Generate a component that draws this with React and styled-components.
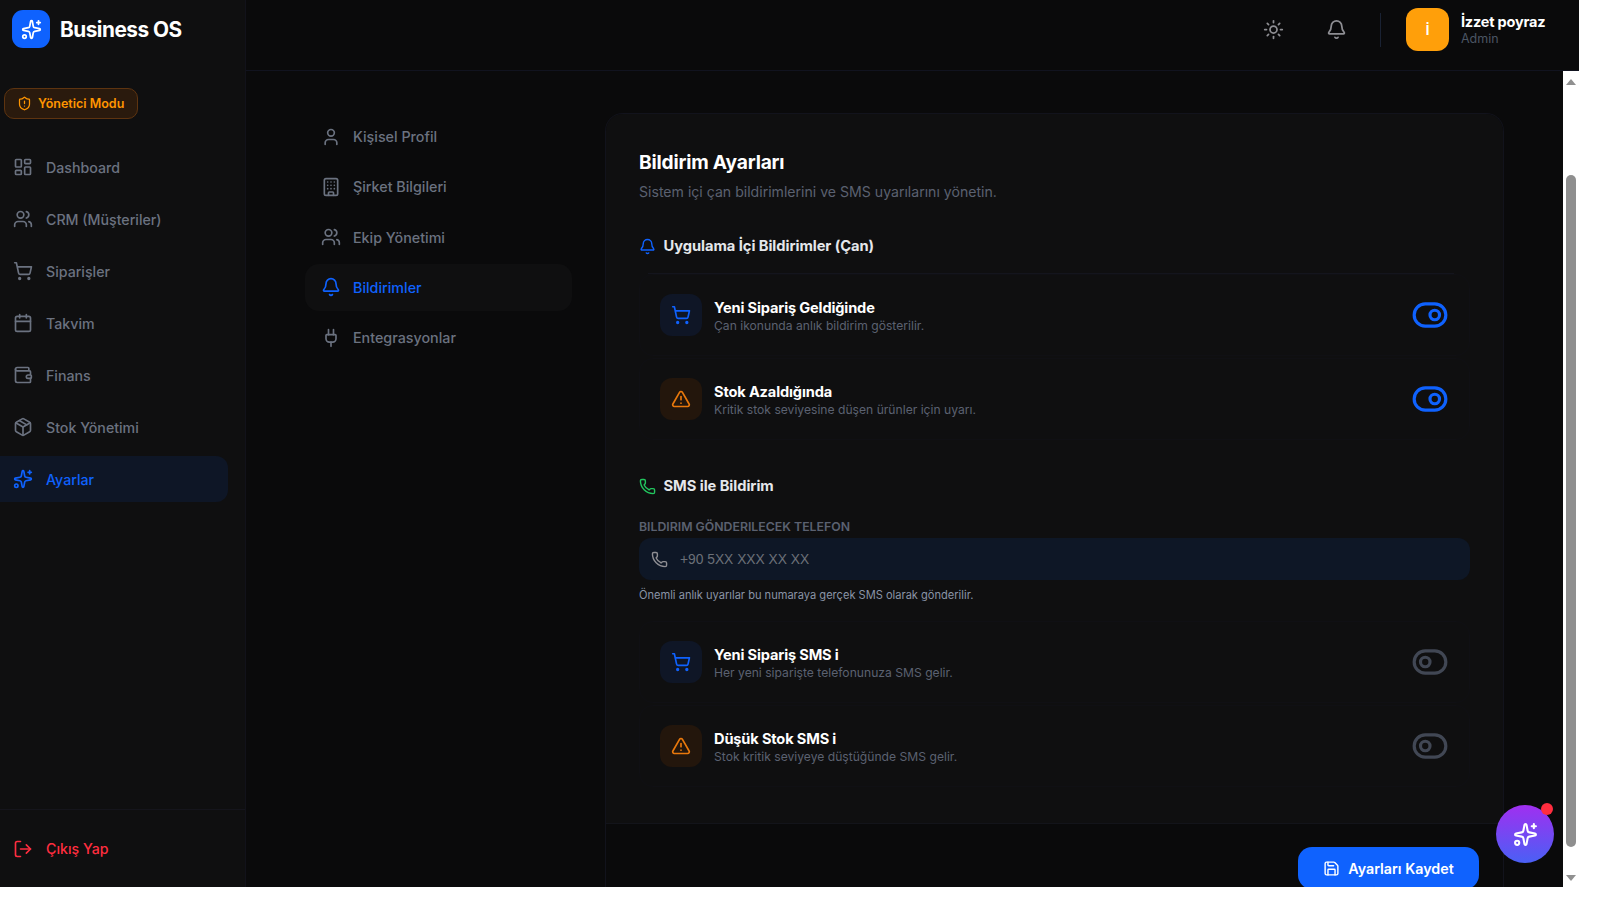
import React from 'react';
import styled, { createGlobalStyle } from 'styled-components';
import {
  Sparkles, ShieldAlert, LayoutDashboard, Users, ShoppingCart, Calendar, Wallet, Package,
  LogOut, Sun, Bell, User, Building, Plug, TriangleAlert, Phone, Save, ToggleRight, ToggleLeft,
} from 'lucide-react';

const Global = createGlobalStyle`
  html, body { margin: 0; padding: 0; background: #fff; overflow: hidden; }
  * { box-sizing: border-box; }
  body { font-family: Inter, "Liberation Sans", sans-serif; }
`;

const Shell = styled.div`
  position: relative; display: flex; width: 1579px; height: 887px; overflow: hidden; background: #0a0a0b;
`;
const Sidebar = styled.aside`
  width: 246px; flex: none; display: flex; flex-direction: column;
  background: #0f0f10; border-right: 1px solid #12121a;
`;
const Brand = styled.div`
  height: 88px; flex: none; display: flex; align-items: flex-start; gap: 10px; padding: 10px 0 0 12px;
`;
const LogoBox = styled.div`
  width: 38px; height: 38px; border-radius: 11px; background: #0f62fe; color: #fff;
  display: flex; align-items: center; justify-content: center;
`;
const BrandName = styled.div`
  font-size: 20.8px; font-weight: 700; color: #fff; letter-spacing: -0.5px; line-height: 39px;
`;
const AdminBadge = styled.div`
  margin-left: 4px; width: 134px; height: 31px; display: flex; align-items: center; gap: 6px; padding-left: 12px;
  border-radius: 10px; background: #2a1a0d; border: 1px solid #5e3410; color: #ff9500;
  font-size: 12.5px; font-weight: 600;
`;
const SideNav = styled.nav`
  margin-top: 25px; display: flex; flex-direction: column; gap: 6px;
`;
const SideItem = styled.div`
  width: 228px; height: 46px; display: flex; align-items: center; gap: 13px; padding-left: 13px;
  border-radius: 0 12px 12px 0;
  font-size: 14.2px; font-weight: 500;
  color: ${p => (p.$active ? '#0f62fe' : '#6b7280')};
  background: ${p => (p.$active ? '#0e1626' : 'transparent')};
`;
const SideFooter = styled.div`
  margin-top: auto; height: 78px; border-top: 1px solid #15151c; display: flex; align-items: center; gap: 13px;
  padding: 0 0 0 13px; color: #ff2d3f; font-size: 14.2px; font-weight: 500;
`;
const Column = styled.div`
  flex: 1; min-width: 0; display: flex; flex-direction: column;
`;
const Header = styled.header`
  height: 71px; flex: none; display: flex; align-items: center; justify-content: flex-end;
  background: #0a0a0b; border-bottom: 1px solid #11131f; padding: 0 33px 11px 0;
`;
const HeaderIcon = styled.div`
  color: #8e8e93; display: flex; margin-right: ${p => p.$mr}px;
`;
const Divider = styled.div`
  width: 1px; height: 34px; background: #1a2233; margin-right: 25px;
`;
const Avatar = styled.div`
  width: 43px; height: 43px; border-radius: 12px; background: #ff9f0a; color: #fff;
  display: flex; align-items: center; justify-content: center; font-size: 13px; font-weight: 700; margin-right: 12px;
`;
const UserBlock = styled.div`
  display: flex; flex-direction: column; width: 85px;
`;
const UserName = styled.div`
  font-size: 14.5px; font-weight: 700; color: #fff; line-height: 18px; white-space: nowrap; letter-spacing: -0.2px;
`;
const UserRole = styled.div`
  font-size: 12.5px; color: #4b5563; line-height: 15px;
`;
const Body = styled.div`
  flex: 1; min-height: 0; display: flex;
`;
const Main = styled.main`
  flex: 1; min-width: 0; overflow: hidden; display: flex; align-items: flex-start; gap: 33px; padding: 42px 0 0 59px;
`;
const SettingsNav = styled.nav`
  width: 267px; flex: none; display: flex; flex-direction: column; gap: 3.3px;
`;
const SettingsItem = styled.div`
  height: 47px; display: flex; align-items: center; gap: 12px; padding-left: 16px; border-radius: 14px;
  font-size: 14.3px; font-weight: 500;
  color: ${p => (p.$active ? '#0f62fe' : '#6b7280')};
  background: ${p => (p.$active ? '#0f0f10' : 'transparent')};
`;
const Card = styled.section`
  width: 899px; flex: none; border-radius: 18px 18px 0 0; min-height: 780px;
  border: 1px solid #12131c; border-bottom: none; overflow: hidden;
`;
const CardBody = styled.div`
  height: 710px; padding: 34px 33px 0 33px; background: #0f0f10; border-bottom: 1px solid #13141a;
`;
const Title = styled.h2`
  margin: 0; font-size: 19.2px; font-weight: 700; color: #fff; line-height: 28px; letter-spacing: -0.2px;
`;
const Subtitle = styled.p`
  margin: 4px 0 0; font-size: 14.1px; color: #5b6170; line-height: 24px;
`;
const SectionHead = styled.div`
  display: flex; align-items: center; gap: 7.5px; height: 26px; color: #e5e7eb; font-size: 14.7px; font-weight: 700;
  letter-spacing: -0.05px;
  margin-top: ${p => p.$mt}px;
`;
const SectionRule = styled.div`
  height: 1px; margin: 14px 16px 0 9px; background: #14151d;
`;
const RowList = styled.div`
  margin-top: ${p => p.$mt}px; display: flex; flex-direction: column; gap: 2px;
`;
const Row = styled.div`
  height: 82px; display: flex; align-items: center; padding: 0 20px 0 20px;
  border: 1px solid #101014; border-radius: 14px;
`;
const IconBox = styled.div`
  width: 42px; height: 42px; flex: none; border-radius: 12px; display: flex; align-items: center; justify-content: center;
  background: ${p => (p.$tone === 'blue' ? '#0f1626' : '#23160c')};
  color: ${p => (p.$tone === 'blue' ? '#0f62fe' : '#e8780c')};
`;
const RowText = styled.div`
  margin-left: 12px; padding-top: 4px; flex: 1; min-width: 0;
`;
const RowTitle = styled.div`
  font-size: 14.6px; font-weight: 700; color: #fff; line-height: 18px; letter-spacing: -0.15px;
`;
const RowDesc = styled.div`
  font-size: 12.13px; color: #5b6170; line-height: 18px;
`;
const ToggleWrap = styled.div`
  display: flex; color: ${p => (p.$on ? '#0f62fe' : '#414754')};
`;
const FieldLabel = styled.div`
  margin-top: 20px; font-size: 12.3px; font-weight: 600; color: #5b6170; line-height: 16px;
`;
const Field = styled.div`
  margin-top: 3px; height: 42px; display: flex; align-items: center; gap: 12px; padding-left: 12px;
  background: #0e1726; border-radius: 12px; color: #8e8e93;
`;
const FieldText = styled.span`
  font-family: "Liberation Sans", Arial, sans-serif; font-size: 13.8px; color: #6b7078;
`;
const Hint = styled.div`
  margin-top: 7px; font-size: 11.08px; color: #8a94a6; line-height: 16px;
`;
const CardFooter = styled.div`
  display: flex; justify-content: flex-end; padding: 23px 24px 0 0;
`;
const SaveButton = styled.button`
  width: 181px; height: 42px; border: none; border-radius: 14px; background: #0f62fe; color: #fff;
  display: flex; align-items: center; justify-content: center; gap: 8px;
  font: 600 14.3px Inter, sans-serif;
`;
const ScrollTrack = styled.div`
  width: 16px; flex: none; background: #fff; display: flex; flex-direction: column; align-items: center;
`;
const ArrowUp = styled.div`
  margin-top: 8px; width: 0; height: 0; border-left: 5px solid transparent; border-right: 5px solid transparent;
  border-bottom: 6px solid #909090;
`;
const Thumb = styled.div`
  margin-top: 90px; width: 10px; height: 672px; background: #8f8f8f; border-radius: 6px;
`;
const ArrowDown = styled.div`
  margin-top: 28px; width: 0; height: 0; border-left: 5px solid transparent; border-right: 5px solid transparent;
  border-top: 6px solid #909090;
`;
const Fab = styled.div`
  position: absolute; left: 1496px; top: 805px; width: 58px; height: 58px; border-radius: 50%;
  background: linear-gradient(180deg, #a02ff0, #4a60f5); color: #fff;
  display: flex; align-items: center; justify-content: center;
`;
const FabDot = styled.span`
  position: absolute; right: 1px; top: -2px; width: 12px; height: 12px; border-radius: 50%; background: #ff2d3f;
`;

const side = [
  [LayoutDashboard, 'Dashboard'],
  [Users, 'CRM (Müşteriler)'],
  [ShoppingCart, 'Siparişler'],
  [Calendar, 'Takvim'],
  [Wallet, 'Finans'],
  [Package, 'Stok Yönetimi'],
];
const settings = [
  [User, 'Kişisel Profil'],
  [Building, 'Şirket Bilgileri'],
  [Users, 'Ekip Yönetimi'],
  [Bell, 'Bildirimler', true],
  [Plug, 'Entegrasyonlar'],
];

function SettingRow({ tone, Icon, title, desc, on }) {
  const T = on ? ToggleRight : ToggleLeft;
  return (
    <Row>
      <IconBox $tone={tone}><Icon size={20} /></IconBox>
      <RowText>
        <RowTitle>{title}</RowTitle>
        <RowDesc>{desc}</RowDesc>
      </RowText>
      <ToggleWrap $on={on}><T size={38} /></ToggleWrap>
    </Row>
  );
}

export default function App() {
  return (
    <Shell>
      <Global />
      <Sidebar>
        <Brand>
          <LogoBox><Sparkles size={21} /></LogoBox>
          <BrandName>Business OS</BrandName>
        </Brand>
        <AdminBadge><ShieldAlert size={15} />Yönetici Modu</AdminBadge>
        <SideNav>
          {side.map(([I, t]) => (
            <SideItem key={t}><I size={20} />{t}</SideItem>
          ))}
          <SideItem $active><Sparkles size={20} />Ayarlar</SideItem>
        </SideNav>
        <SideFooter><LogOut size={20} />Çıkış Yap</SideFooter>
      </Sidebar>
      <Column>
        <Header>
          <HeaderIcon $mr={42}><Sun size={21} /></HeaderIcon>
          <HeaderIcon $mr={33}><Bell size={21} /></HeaderIcon>
          <Divider />
          <Avatar>İ</Avatar>
          <UserBlock>
            <UserName>İzzet poyraz</UserName>
            <UserRole>Admin</UserRole>
          </UserBlock>
        </Header>
        <Body>
          <Main>
            <SettingsNav>
              {settings.map(([I, t, a]) => (
                <SettingsItem key={t} $active={a}><I size={20} />{t}</SettingsItem>
              ))}
            </SettingsNav>
            <Card>
              <CardBody>
                <Title>Bildirim Ayarları</Title>
                <Subtitle>Sistem içi çan bildirimlerini ve SMS uyarılarını yönetin.</Subtitle>
                <SectionHead $mt={29}><Bell size={17} color="#0f62fe" />Uygulama İçi Bildirimler (Çan)</SectionHead>
                <SectionRule />
                <RowList $mt={0}>
                  <SettingRow tone="blue" Icon={ShoppingCart} title="Yeni Sipariş Geldiğinde" desc="Çan ikonunda anlık bildirim gösterilir." on />
                  <SettingRow tone="orange" Icon={TriangleAlert} title="Stok Azaldığında" desc="Kritik stok seviyesine düşen ürünler için uyarı." on />
                </RowList>
                <SectionHead $mt={33}><Phone size={17} color="#22c55e" />SMS ile Bildirim</SectionHead>
                <FieldLabel>BILDIRIM GÖNDERILECEK TELEFON</FieldLabel>
                <Field><Phone size={17} /><FieldText>+90 5XX XXX XX XX</FieldText></Field>
                <Hint>Önemli anlık uyarılar bu numaraya gerçek SMS olarak gönderilir.</Hint>
                <RowList $mt={18}>
                  <SettingRow tone="blue" Icon={ShoppingCart} title="Yeni Sipariş SMS i" desc="Her yeni siparişte telefonunuza SMS gelir." />
                  <SettingRow tone="orange" Icon={TriangleAlert} title="Düşük Stok SMS i" desc="Stok kritik seviyeye düştüğünde SMS gelir." />
                </RowList>
              </CardBody>
              <CardFooter>
                <SaveButton><Save size={17} />Ayarları Kaydet</SaveButton>
              </CardFooter>
            </Card>
          </Main>
          <ScrollTrack>
            <ArrowUp />
            <Thumb />
            <ArrowDown />
          </ScrollTrack>
        </Body>
      </Column>
      <Fab><Sparkles size={25} /><FabDot /></Fab>
    </Shell>
  );
}
